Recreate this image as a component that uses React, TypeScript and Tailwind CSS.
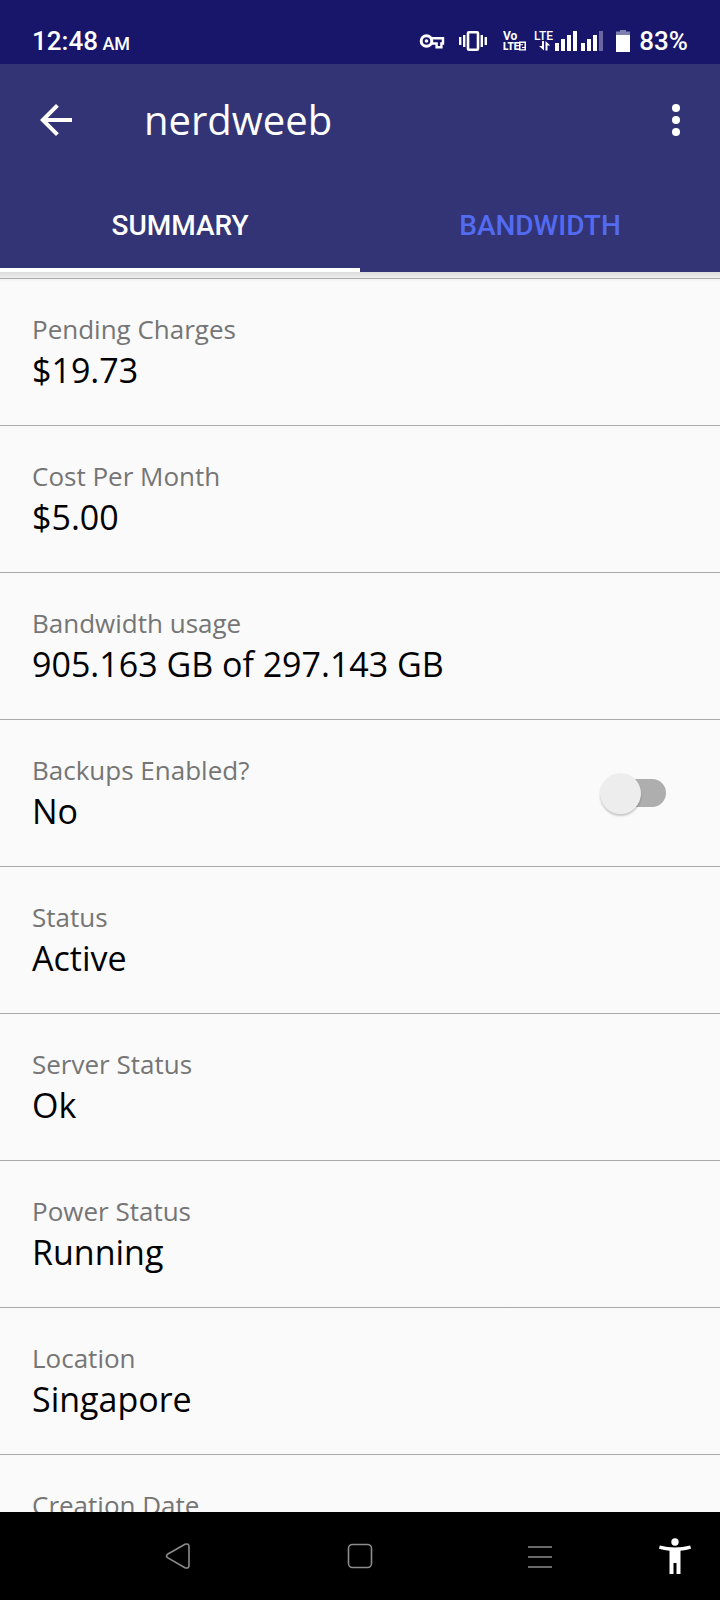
import { useState } from "react";

const details = [
  { label: "Pending Charges", value: "$19.73" },
  { label: "Cost Per Month", value: "$5.00" },
  { label: "Bandwidth usage", value: "905.163 GB of 297.143 GB" },
  { label: "Backups Enabled?", value: "No", toggle: true },
  { label: "Status", value: "Active" },
  { label: "Server Status", value: "Ok" },
  { label: "Power Status", value: "Running" },
  { label: "Location", value: "Singapore" },
  { label: "Creation Date", value: "" },
];

function StatusBar() {
  return (
    <div className="flex h-16 shrink-0 items-end justify-between bg-[#17166b] px-8 pb-[7px] font-[Roboto,sans-serif] text-[26px] leading-8 font-medium text-white">
      <p>
        12:48 <span className="-ml-0.5 text-[18px] leading-none">AM</span>
      </p>
      <div className="flex items-center">
        <svg className="mr-3.5" width="26" height="22" viewBox="0 0 26 22" fill="none" stroke="currentColor">
          <circle cx="7.5" cy="11" r="5.3" strokeWidth="3" />
          <circle cx="7.5" cy="11" r="1.8" fill="currentColor" stroke="none" />
          <path d="M12.5 8.3H24v5.2h-1.6v3.800h-4.8v-3.800h-5.1" strokeWidth="2.4" />
        </svg>
        <svg className="mr-4" width="28" height="22" viewBox="0 0 28 22">
          <g fill="currentColor">
            <path d="M0 7h2.4v8H0zM4 5h2.4v12H4zM21.6 5H24v12h-2.4zM25.6 7H28v8h-2.4z" />
          </g>
          <rect x="9" y="2.2" width="10" height="17.6" rx="1" fill="none" stroke="currentColor" strokeWidth="2.6" />
        </svg>
        <svg className="mr-[7px]" width="24" height="22" viewBox="0 0 24 22" fill="currentColor">
          <text x="0" y="10" fontSize="12" fontWeight="700">Vo</text>
          <text x="0" y="20" fontSize="10" fontWeight="900">LTE</text>
          <path fillRule="evenodd" d="M16 11.500h7v9h-7zM17.500 13v1.200h2.500v1h-2.500v4h4v-1.200h-2.500v-1h2.500v-4z" />
        </svg>
        <svg className="mr-3" width="69" height="22" viewBox="0 0 69 22" fill="currentColor">
          <text x="0" y="10" fontSize="12" fontWeight="500">LTE</text>
          <path d="M8 11h2v9.500L5 16h3zM11.500 20.500h2v-5h2.800L11.500 11z" />
          <path d="M21 13h4v8h-4zM27 9h4v12h-4zM33 5h4v16h-4zM39 1h4v20h-4zM47 13h4v8h-4zM53 9h4v12h-4zM59 5h4v16h-4z" />
          <path d="M65 1h4v20h-4z" opacity="0.35" />
        </svg>
        <svg className="mr-2" width="16" height="22" viewBox="0 0 16 22" fill="currentColor">
          <path d="M5 0h6v1.500h4V5H1V1.500h4z" opacity="0.45" />
          <path d="M1 5h14v17H1z" />
        </svg>
        <span>83%</span>
      </div>
    </div>
  );
}

function Header() {
  return (
    <header className="shrink-0 bg-[#333476] text-white">
      <div className="flex h-28 items-center pr-5 pl-8">
        <button type="button" aria-label="Back">
          <svg width="48" height="48" viewBox="0 0 24 24" fill="currentColor">
            <path d="M20 11H7.830l5.590-5.590L12 4l-8 8 8 8 1.410-1.410L7.830 13H20v-2z" />
          </svg>
        </button>
        <h1 className="ml-16 flex-1 text-[40px] leading-[56px]">nerdweeb</h1>
        <button type="button" aria-label="More options">
          <svg width="48" height="48" viewBox="0 0 24 24" fill="currentColor">
            <circle cx="12" cy="6" r="2" />
            <circle cx="12" cy="12" r="2" />
            <circle cx="12" cy="18" r="2" />
          </svg>
        </button>
      </div>
      <div role="tablist" className="grid h-24 grid-cols-2 font-[Roboto,sans-serif] text-[28px] font-medium">
        <button type="button" role="tab" aria-selected="true" className="border-b-4 border-white pt-2">
          SUMMARY
        </button>
        <button type="button" role="tab" aria-selected="false" className="pt-1 text-[#526bf0]">
          BANDWIDTH
        </button>
      </div>
    </header>
  );
}

function Toggle({ id }: { id: string }) {
  const [on, setOn] = useState(false);

  return (
    <label htmlFor={id} className="relative mr-[22px] flex h-[42px] w-[66px] items-center justify-end">
      <input
        id={id}
        type="checkbox"
        role="switch"
        aria-label="Backups Enabled?"
        className="peer sr-only"
        checked={on}
        onChange={(e) => setOn(e.target.checked)}
      />
      <span className="h-7 w-14 rounded-full bg-[#aeaeae] peer-checked:bg-[#536dfe]" />
      <span className="absolute top-px left-0 size-[41px] rounded-full bg-[#ededed] shadow-[0_2px_2px_rgba(0,0,0,0.2)] peer-checked:left-6" />
    </label>
  );
}

function NavBar() {
  return (
    <nav className="grid h-[88px] shrink-0 grid-cols-8 bg-black text-[#8c8c8c]">
      <button type="button" aria-label="Back" className="col-span-2 col-start-2 flex items-center justify-center">
        <svg className="mr-1" width="26" height="28" viewBox="0 0 26 28" fill="none" stroke="currentColor" strokeWidth="1.6">
          <path d="M2.500 12.300L20 2.300Q24 1 24 4.500v19Q24 27 20 25.700L2.500 15.700Q0.500 14 2.500 12.300z" />
        </svg>
      </button>
      <button type="button" aria-label="Home" className="col-span-2 flex items-center justify-center">
        <svg width="26" height="26" viewBox="0 0 26 26" fill="none" stroke="currentColor" strokeWidth="1.6">
          <rect x="1.500" y="1.500" width="23" height="23" rx="4" />
        </svg>
      </button>
      <button type="button" aria-label="Recent apps" className="col-span-2 flex items-center justify-center">
        <svg width="24" height="24" viewBox="0 0 24 24" fill="none" stroke="currentColor" strokeWidth="1.6">
          <path d="M0 3h24M0 13h24M0 23h24" />
        </svg>
      </button>
      <button type="button" aria-label="Accessibility" className="flex items-center justify-center text-white">
        <svg width="32" height="36" viewBox="0 0 32 36" fill="currentColor">
          <circle cx="16" cy="4" r="3.700" />
          <path d="M0.800 7.500Q16 11.500 31.200 7.500l0.800 3.300Q27 12.300 21.500 12.800V36h-4V25h-3v11h-4V12.800Q5 12.300 0 10.800z" />
        </svg>
      </button>
    </nav>
  );
}

export default function App() {
  return (
    <div className="flex h-screen flex-col bg-[#fafafa] font-['Open_Sans',sans-serif]">
      <StatusBar />
      <Header />
      <main className="min-h-0 flex-1 overflow-hidden bg-linear-to-b from-[#dcdcdc] to-[#fafafa] to-[10px] pt-1.5">
        <dl>
          {details.map(({ label, value, toggle }) => (
            <div key={label} className="flex items-center justify-between border-t border-[#aaaaaa] px-8 py-8">
              <div>
                <dt className="text-[26px] leading-9 text-[#757575]">{label}</dt>
                <dd className="text-[34px] leading-[46px] text-black">{value}</dd>
              </div>
              {toggle && (
                <dd>
                  <Toggle id="backups" />
                </dd>
              )}
            </div>
          ))}
        </dl>
      </main>
      <NavBar />
    </div>
  );
}
